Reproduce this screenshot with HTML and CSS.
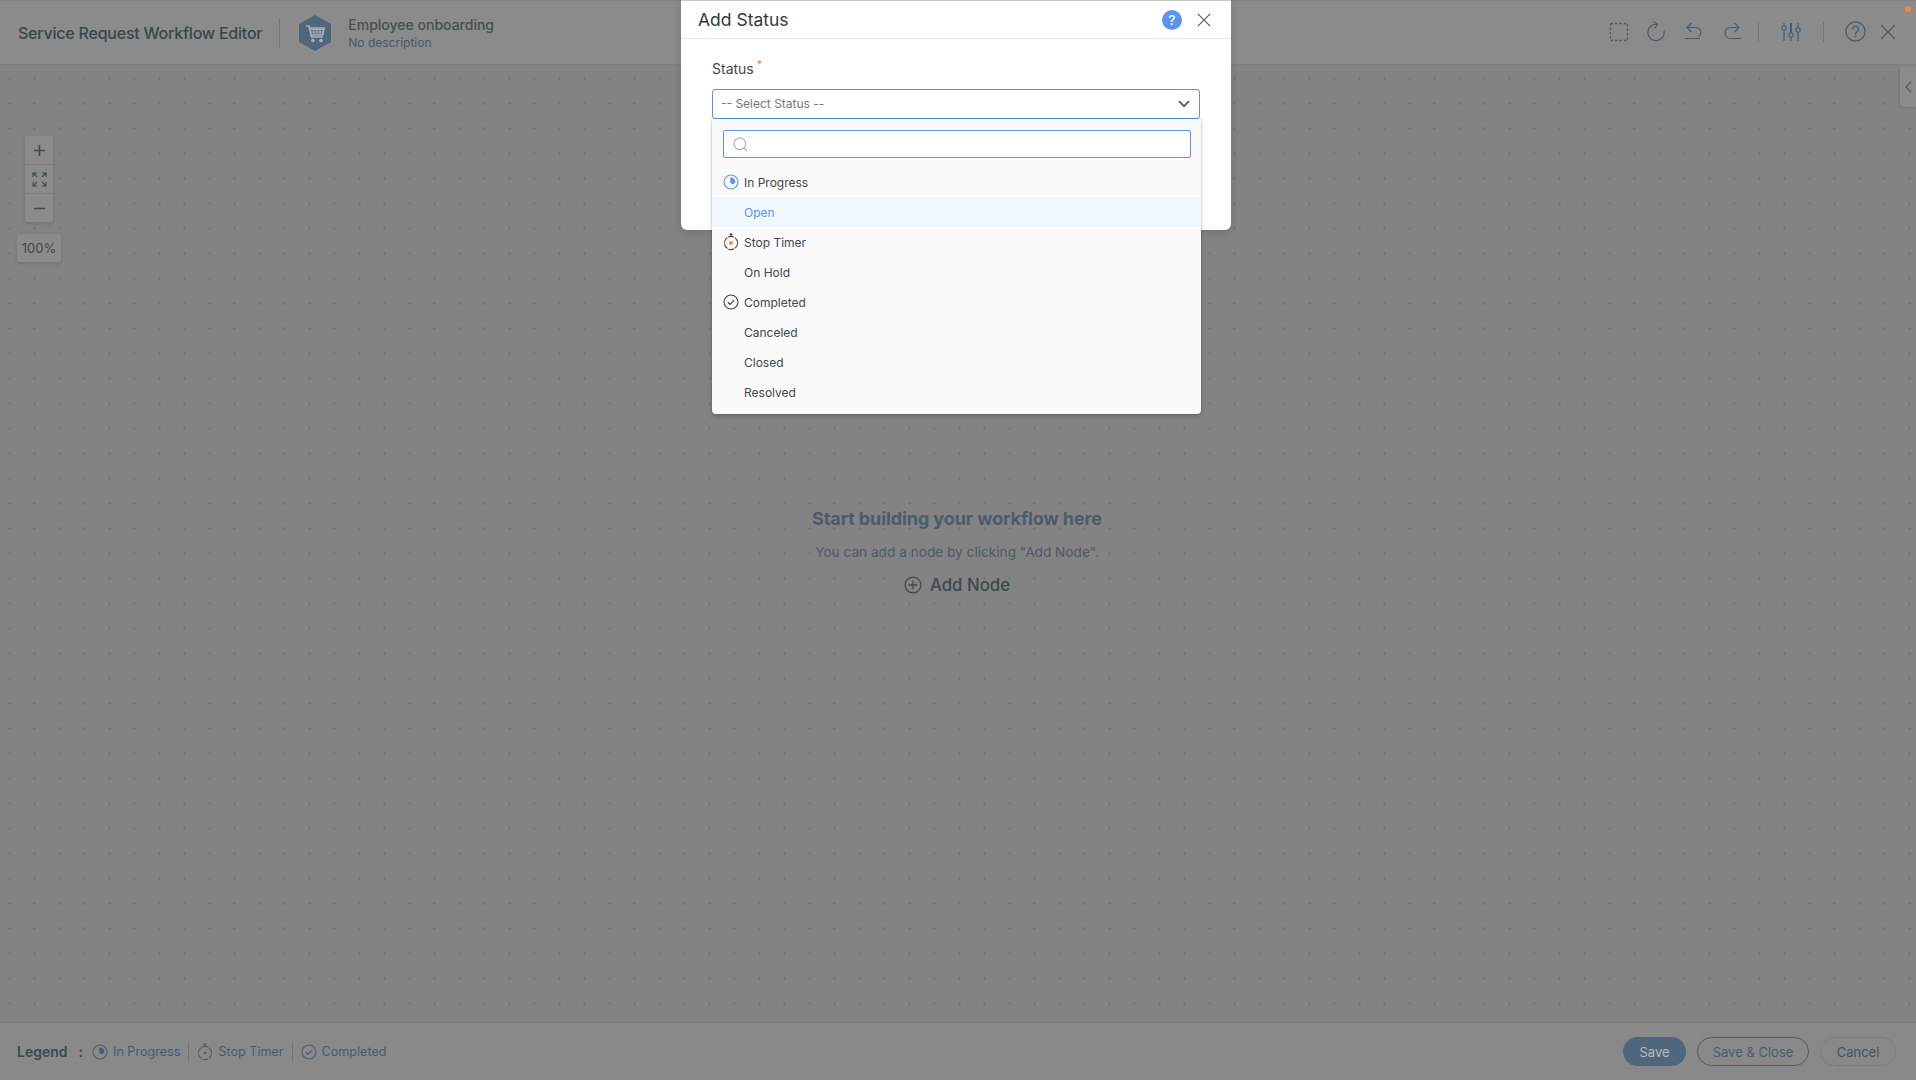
FILE: index.html
```html
<!DOCTYPE html>
<html lang="en">
<head>
<meta charset="utf-8">
<title>Service Request Workflow Editor</title>
<link rel="stylesheet" href="styles.css">
</head>
<body>
<svg class="defs" width="0" height="0" aria-hidden="true">
  <symbol id="i-progress" viewBox="0 0 16 16">
    <circle cx="8" cy="8" r="7" fill="none" stroke="currentColor" stroke-width="1.1"/>
    <path d="M7.2 3.6 A4.5 4.5 0 0 1 12.3 8.6 L9.6 10.6 L7.2 8.4 Z" fill="currentColor"/>
  </symbol>
  <symbol id="i-timer" viewBox="0 0 16 18">
    <circle cx="8" cy="10" r="6.6" fill="none" stroke="currentColor" stroke-width="1.1" stroke-dasharray="6 1"/>
    <path d="M6.4 1.2h3.2M8 1.2v2.2" fill="none" stroke="currentColor" stroke-width="1.2"/>
  </symbol>
  <symbol id="i-check" viewBox="0 0 16 16">
    <circle cx="8" cy="8" r="7" fill="none" stroke="currentColor" stroke-width="1.1"/>
    <path d="M4.9 8.2l2.2 2.1 4-4.2" fill="none" stroke="currentColor" stroke-width="1.2"/>
  </symbol>
  <symbol id="i-close" viewBox="0 0 16 16">
    <path d="M1 1l14 14M15 1L1 15" fill="none" stroke="currentColor" stroke-width="1.3"/>
  </symbol>
</svg>

<header class="topbar">
  <h1 class="app-title">Service Request Workflow Editor</h1>
  <span class="vsep vsep-title"></span>
  <svg class="hex" width="34" height="36" viewBox="0 0 34 36">
    <path d="M17 0L33 9v18L17 36 1 27V9z" fill="#4f667b"/>
    <path d="M8 11h3l2.5 11h11M11.8 13h14.4l-1.6 7H13.2" fill="none" stroke="#a9b3bb" stroke-width="1.6"/>
    <path d="M13 14.5h12M13 17h12M16 13.5v6M19 13.5v6M22 13.5v6" stroke="#a9b3bb" stroke-width="1"/>
    <circle cx="14.8" cy="25.5" r="1.8" fill="#a9b3bb"/><circle cx="23" cy="25.5" r="1.8" fill="#a9b3bb"/>
  </svg>
  <div class="wf-name">
    <div class="wf-title">Employee onboarding</div>
    <div class="wf-desc">No description</div>
  </div>
  <div class="tools">
    <svg class="tool t-select" width="20" height="20" viewBox="0 0 20 20"><rect x="1.5" y="1.5" width="17" height="17" fill="none" stroke="currentColor" stroke-width="1.3" stroke-dasharray="2.4 2"/></svg>
    <svg class="tool t-refresh" width="20" height="22" viewBox="0 0 20 22"><path d="M11.5 3.4A8.2 8.2 0 1 0 18 9.5" fill="none" stroke="currentColor" stroke-width="1.2"/><path d="M7.6 .8l4 2.7-3 3.6" fill="none" stroke="currentColor" stroke-width="1.2"/></svg>
    <svg class="tool t-undo" width="20" height="20" viewBox="0 0 20 20"><path d="M7.500 1L3 5.500l4.500 4.500M3 5.500h9a5 5 0 0 1 4.900 5.500c-.2 1.500-.9 2.700-2 3.500M1 16.500h15" fill="none" stroke="currentColor" stroke-width="1.2"/></svg>
    <svg class="tool t-redo" width="20" height="20" viewBox="0 0 20 20"><path d="M12.500 1L17 5.500 12.500 10M17 5.500H8A5 5 0 0 0 3.100 11c.3 3 2.500 5.500 5.400 5.500H19" fill="none" stroke="currentColor" stroke-width="1.2"/></svg>
    <span class="vsep"></span>
    <svg class="tool t-sliders" width="20" height="18" viewBox="0 0 20 18"><path d="M3 0v2.800M3 7.200V18M10 9.800V0M10 14.200V18M17 0v4.800M17 9.200V18" stroke="currentColor" stroke-width="1.200"/><path d="M10 0v9.800" stroke="currentColor" stroke-width="2"/><circle cx="3" cy="5" r="2.200" fill="none" stroke="currentColor" stroke-width="1.100"/><circle cx="10" cy="12" r="2.200" fill="none" stroke="currentColor" stroke-width="1.100"/><circle cx="17" cy="7" r="2.200" fill="none" stroke="currentColor" stroke-width="1.100"/></svg>
    <span class="vsep"></span>
    <svg class="tool t-help" width="21" height="21" viewBox="0 0 21 21"><circle cx="10.500" cy="10.500" r="9.600" fill="none" stroke="currentColor" stroke-width="1.200"/><path d="M7.500 8.300a3 3 0 1 1 4.600 2.500c-1 .6-1.600 1.100-1.600 2.400" fill="none" stroke="currentColor" stroke-width="1.300"/><circle cx="10.500" cy="15.500" r=".9" fill="currentColor"/></svg>
    <svg class="tool t-close" width="16" height="16"><use href="#i-close"/></svg>
  </div>
  <span class="notice-dot"></span>
</header>

<main class="canvas">
  <div class="zoom-stack">
    <div class="zoom-box">
      <div class="zoom-btn">
        <svg width="11" height="11" viewBox="0 0 11 11"><path d="M5.500 0v11M0 5.500h11" stroke="currentColor" stroke-width="1.500"/></svg>
      </div>
      <div class="zoom-btn">
        <svg width="15" height="15" viewBox="0 0 15 15"><path d="M1 5V1h4M1 1l4 4M10 1h4v4M14 1l-4 4M1 10v4h4M1 14l4-4M10 14h4v-4M14 14l-4-4" fill="none" stroke="currentColor" stroke-width="1.100"/></svg>
      </div>
      <div class="zoom-btn">
        <svg width="11" height="3" viewBox="0 0 11 3"><path d="M0 1.500h11" stroke="currentColor" stroke-width="1.500"/></svg>
      </div>
    </div>
    <div class="zoom-pct">100%</div>
  </div>

  <button class="side-toggle" type="button" aria-label="Expand panel">
    <svg width="7" height="12" viewBox="0 0 7 12"><path d="M6 .8L1 6l5 5.200" fill="none" stroke="currentColor" stroke-width="1.300"/></svg>
  </button>

  <section class="empty">
    <h2 class="empty-title">Start building your workflow here</h2>
    <p class="empty-text">You can add a node by clicking "Add Node".</p>
    <div class="add-node">
      <svg width="18" height="18" viewBox="0 0 18 18"><circle cx="9" cy="9" r="7.900" fill="none" stroke="currentColor" stroke-width="1.300"/><path d="M9 4.800v8.400M4.800 9h8.400" stroke="currentColor" stroke-width="1.300"/></svg>
      <span>Add Node</span>
    </div>
  </section>
</main>

<footer class="bottombar">
  <div class="legend">
    <strong class="legend-label">Legend</strong>
    <span class="legend-colon">:</span>
    <span class="legend-item"><svg width="16" height="16"><use href="#i-progress"/></svg>In Progress</span>
    <span class="legend-item"><svg width="16" height="18" viewBox="0 0 16 18"><use href="#i-timer"/><rect x="7" y="9" width="2" height="2" fill="currentColor"/></svg>Stop Timer</span>
    <span class="legend-item"><svg width="16" height="16"><use href="#i-check"/></svg>Completed</span>
  </div>
  <div class="actions">
    <button class="btn btn-primary" type="button">Save</button>
    <button class="btn btn-outline" type="button">Save &amp; Close</button>
    <button class="btn btn-ghost" type="button">Cancel</button>
  </div>
</footer>

<div class="modal" role="dialog" aria-label="Add Status">
  <div class="modal-head">
    <span class="modal-title">Add Status</span>
    <span class="help-badge">?</span>
    <svg class="modal-close" width="14" height="14"><use href="#i-close"/></svg>
  </div>
  <div class="modal-body">
    <label class="field-label">Status<sup class="req">*</sup></label>
    <div class="select">
      <span class="select-text">-- Select Status --</span>
      <svg width="12" height="8" viewBox="0 0 12 8"><path d="M1 1.200l5 5 5-5" fill="none" stroke="currentColor" stroke-width="1.700"/></svg>
    </div>
    <div class="dropdown">
      <div class="search">
        <svg width="15" height="15" viewBox="0 0 15 15"><circle cx="6.800" cy="6.800" r="5.800" fill="none" stroke="currentColor" stroke-width="1.100"/><path d="M11 11l3 3" stroke="currentColor" stroke-width="1.100"/></svg>
      </div>
      <ul class="options">
        <li class="group group-progress"><svg width="16" height="16"><use href="#i-progress"/></svg>In Progress</li>
        <li class="option active">Open</li>
        <li class="group"><svg width="16" height="18" viewBox="0 0 16 18"><use href="#i-timer"/><rect class="timer-core" x="6.300" y="8.300" width="3.400" height="3.400"/></svg>Stop Timer</li>
        <li class="option">On Hold</li>
        <li class="group"><svg width="16" height="16"><use href="#i-check"/></svg>Completed</li>
        <li class="option">Canceled</li>
        <li class="option">Closed</li>
        <li class="option">Resolved</li>
      </ul>
    </div>
  </div>
</div>
</body>
</html>
```

FILE: styles.css
```css
* { box-sizing: border-box; }
html, body { height: 100%; }
body {
  margin: 0;
  height: 1080px;
  overflow: hidden;
  display: flex;
  flex-direction: column;
  font-family: Inter, "Noto Sans", "Liberation Sans", sans-serif;
  background: #838383;
  color: #3b4a4e;
  position: relative;
}
.defs { position: absolute; }

/* top bar */
.topbar {
  height: 65px;
  flex: none;
  display: flex;
  align-items: center;
  padding-left: 18px;
  background: #8b8b8b;
  border-top: 1px solid #808080;
  border-bottom: 1px solid #7f7f7f;
  position: relative;
}
.app-title { margin: 0; font-size: 16px; font-weight: 500; letter-spacing: -.22px; color: #38474a; white-space: nowrap; }
.vsep { width: 1px; height: 20px; background: #757575; flex: none; }
.vsep-title { height: 30px; margin: 0 18px 0 17px; }
.hex { flex: none; }
.wf-name { margin-left: 16px; }
.wf-title { font-size: 14px; font-weight: 500; line-height: 19px; color: #43504f; }
.wf-desc { font-size: 12px; line-height: 17px; color: #4a5862; }
.tools {
  margin-left: auto;
  display: flex;
  align-items: center;
  padding: 0 20px 2px 0;
  color: #4a5c6b;
}
.tool { flex: none; }
.t-select { margin-right: 17px; }
.t-refresh { margin-right: 18px; }
.t-undo { margin-right: 18px; }
.t-redo { margin-right: 16px; }
.t-sliders { margin: 0 22px 0 22px; }
.t-help { margin: 0 14px 0 21px; }
.notice-dot {
  position: absolute; top: 5px; right: 5px;
  width: 6px; height: 6px; border-radius: 50%;
  background: #f08a42;
}

/* canvas */
.canvas {
  flex: 1;
  position: relative;
  display: flex;
  flex-direction: column;
  align-items: center;
  padding: 442px 2px 0 0;
  background-color: #838383;
  background-image: radial-gradient(circle, #747474 1px, transparent 1.200px);
  background-size: 25px 25px;
  background-position: -3px 1px;
}
.zoom-stack {
  position: absolute; left: 17px; top: 71px;
  width: 44px;
  display: flex; flex-direction: column; align-items: center; gap: 12px;
}
.zoom-box {
  width: 28px; height: 86px;
  background: #8b8b8b;
  border-radius: 3px;
  box-shadow: 0 2px 4px rgba(0,0,0,.12);
  display: flex; flex-direction: column;
  color: #3b4a4e;
}
.zoom-btn { flex: 1; display: flex; align-items: center; justify-content: center; }
.zoom-btn + .zoom-btn { border-top: 1px dotted #737373; }
.zoom-pct {
  width: 44px; height: 28px;
  background: #8b8b8b; border-radius: 3px;
  box-shadow: 0 2px 4px rgba(0,0,0,.12);
  font-size: 13px; color: #3b4a4e;
  display: flex; align-items: center; justify-content: center;
}
.side-toggle {
  position: absolute; right: 0; top: 2px;
  width: 16px; height: 40px;
  padding: 0;
  border: 0;
  border-radius: 3px 0 0 3px;
  background: #8b8b8b;
  color: #4a5c6b;
  box-shadow: -1px 1px 2px rgba(0,0,0,.12);
  display: flex; align-items: center; justify-content: center;
}

/* empty state */
.empty { display: flex; flex-direction: column; align-items: center; }
.empty-title { margin: 0; font-size: 18px; line-height: 24px; font-weight: 700; color: #4a5c6c; letter-spacing: -.1px; }
.empty-text { margin: 12px 0 0; font-size: 13.650px; line-height: 18px; color: #4a5c6b; }
.add-node {
  margin-top: 13px;
  display: flex; align-items: center; gap: 8px;
  font-size: 16.800px; line-height: 22px; font-weight: 500; color: #3b4a4e;
}

/* bottom bar */
.bottombar {
  height: 58px;
  flex: none;
  display: flex;
  align-items: center;
  justify-content: space-between;
  padding: 0 20px 0 17px;
  background: #898989;
  border-top: 1px solid #7f7f7f;
}
.legend { display: flex; align-items: center; }
.legend-label { font-size: 14px; font-weight: 600; color: #3b4a4e; }
.legend-colon { font-size: 14px; font-weight: 600; margin: 0 9px 0 11px; }
.legend-item {
  display: flex; align-items: center; gap: 5px;
  font-size: 12.600px; color: #4a5c6b;
  height: 20px;
}
.legend-item + .legend-item { margin-left: 8px; padding-left: 8px; border-left: 1px solid #777; }
.actions { display: flex; gap: 11px; }
.btn {
  height: 29px;
  border-radius: 15px;
  font: 400 13px Inter, "Noto Sans", sans-serif;
  background: transparent;
  padding: 0;
}
.btn-primary { width: 63px; background: #4f667b; border: 0; color: #b3bcc3; }
.btn-outline { width: 112px; border: 1px solid #4a5c6b; color: #4a5c6b; }
.btn-ghost { width: 76px; border: 1px dotted #737373; color: #44525a; }

/* modal */
.modal {
  position: absolute;
  left: 681px; top: 0;
  width: 550px; height: 230px;
  background: #fff;
  border-radius: 0 0 6px 6px;
  border-top: 1px solid #c9c9c9;
  box-shadow: 0 2px 8px rgba(0,0,0,.15);
  color: #333;
}
.modal-head {
  height: 38px;
  display: flex; align-items: center;
  padding: 0 20px 0 17px;
  border-bottom: 1px solid #e4e5e8;
}
.modal-title { font-size: 17.500px; font-weight: 400; color: #33383d; }
.help-badge {
  margin-left: auto;
  width: 20px; height: 20px; border-radius: 50%;
  background: #5b93ee; color: #fff;
  font-size: 13px; font-weight: 500;
  display: flex; align-items: center; justify-content: center;
}
.modal-close { margin-left: 15px; color: #54585c; }
.modal-body { position: relative; padding: 21px 31px 0; }
.field-label { display: block; font-size: 14px; line-height: 18px; color: #44494d; }
.req { color: #f08a42; font-size: 11px; line-height: 0; margin-left: 3px; }
.select {
  margin-top: 11px;
  width: 488px; height: 30px;
  border: 1px solid #5b93ee; border-radius: 3px;
  display: flex; align-items: center; justify-content: space-between;
  padding: 0 9px 0 8px;
  font-size: 12px; color: #77797c;
}
.select-text { padding-bottom: 2px; }
.select svg { color: #54585c; }
.dropdown {
  position: absolute;
  left: 31px; top: 80px;
  width: 489px; height: 295px;
  background: #fbfbfc;
  border-radius: 0 0 4px 4px;
  box-shadow: 0 0 0 1px rgba(0,0,0,.06), 0 2px 4px rgba(0,0,0,.2);
  padding-top: 11px;
}
.search {
  margin: 0 10px 0 11px;
  height: 28px;
  background: #fff;
  border: 1px solid #5b93ee; border-radius: 2px;
  display: flex; align-items: center;
  padding-left: 9px;
  color: #a9acaf;
}
.options { list-style: none; margin: 9px 0 0; padding: 0; font-size: 12px; }
.options li { height: 30px; display: flex; align-items: center; color: #40464b; }
.group { padding-left: 11px; gap: 5px; }
.group svg { flex: none; }
.group-progress svg { color: #5b93ee; }
.option { padding-left: 32px; }
.option.active { background: #f0f8fe; }
.options .option.active { color: #5b93ee; }
.timer-core { fill: #f08a42; }
```
